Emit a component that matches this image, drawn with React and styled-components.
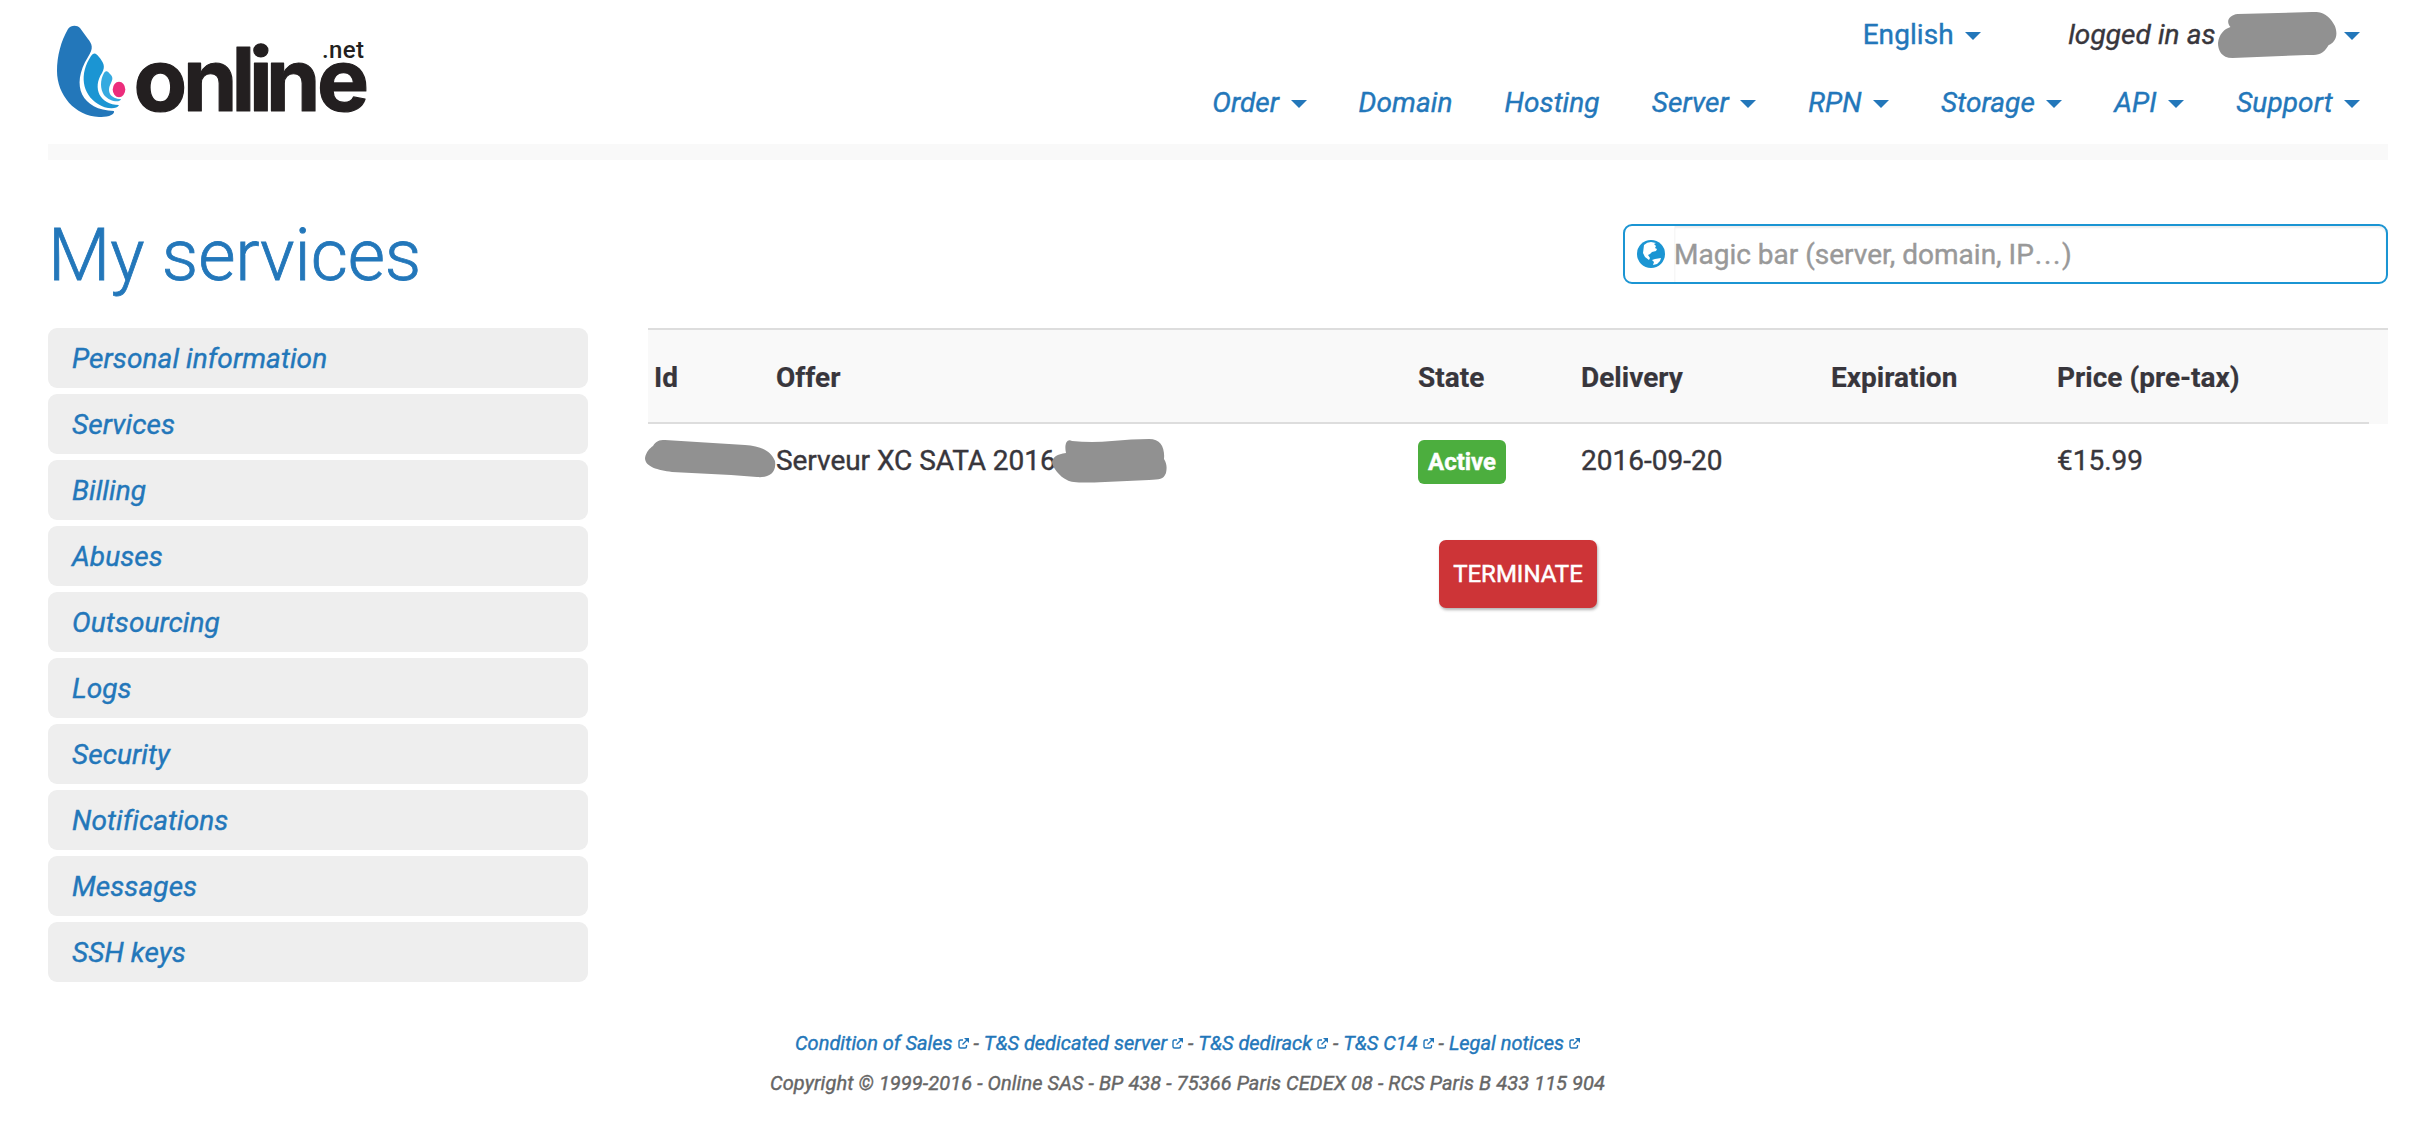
import React from "react";
import styled, { createGlobalStyle } from "styled-components";

const blue = "#2377ba";

const GlobalStyle = createGlobalStyle`
  body {
    margin: 0;
    background: #fff;
    color: #38363c;
    font-family: Roboto, "Liberation Sans", sans-serif;
    font-size: 28px;
    line-height: 40px;
    -webkit-text-stroke: 0.4px;
  }
  *, *::before, *::after { box-sizing: border-box; }
`;

const Page = styled.div`
  width: 2420px;
  height: 1130px;
  padding: 0 32px 0 48px;
  overflow: hidden;
`;

const Header = styled.header`
  display: flex;
  justify-content: space-between;
  height: 160px;
  border-bottom: 16px solid #f9f9f9;
`;

const Logo = styled.svg`
  display: block;
  flex: none;
  width: 332px;
  height: 144px;
  -webkit-text-stroke: 0;
`;

const Menus = styled.div`
  display: flex;
  flex-direction: column;
  align-items: flex-end;
  padding: 15px 28px 0 0;
  gap: 28px;
`;

const Nav = styled.nav`
  display: flex;
  gap: ${(p) => p.$gap}px;
  height: 40px;
`;

const NavLink = styled.a`
  display: inline-flex;
  align-items: center;
  height: 40px;
  color: ${(p) => (p.$dark ? "#38363c" : blue)};
  font-style: ${(p) => (p.$upright ? "normal" : "italic")};
  letter-spacing: 0.08px;
  text-decoration: none;
  white-space: nowrap;
`;

const Caret = styled.span`
  width: 0;
  height: 0;
  margin: 2px 0 0 11.4px;
  border: 8px solid transparent;
  border-top-color: ${blue};
  border-bottom: 0;
`;

const UserMask = styled.svg`
  display: block;
  flex: none;
  width: 121px;
  height: 46px;
  margin: 0 -5px 0 1px;
`;

const TitleRow = styled.div`
  display: flex;
  justify-content: space-between;
  align-items: flex-start;
  height: 168px;
  padding-top: 51px;
`;

const Title = styled.h1`
  margin: 0;
  color: ${blue};
  font-size: 72px;
  line-height: 90px;
  font-weight: 300;
  letter-spacing: -0.1px;
  -webkit-text-stroke: 0.8px;
`;

const SearchBox = styled.label`
  display: flex;
  align-items: center;
  width: 765px;
  height: 60px;
  margin-top: 13px;
  padding-left: 12px;
  border: 2px solid #1b95d3;
  border-radius: 9px;
`;

const Globe = styled.svg`
  flex: none;
  width: 28px;
  height: 28px;
`;

const SearchField = styled.div`
  position: relative;
  flex: 1;
  height: 56px;
  margin-left: 9px;
  color: #999;
`;

const SearchInput = styled.input`
  display: block;
  width: 100%;
  height: 100%;
  padding: 0;
  border: 0;
  border-left: 1px solid #f7f7f7;
  border-radius: 0 7px 7px 0;
  outline: 0;
  background: transparent;
  box-shadow: inset 0 2px 2px rgba(0, 0, 0, 0.07);
  font: inherit;
`;

const Hint = styled.span`
  position: absolute;
  top: 9px;
  left: 0;
  pointer-events: none;
  white-space: nowrap;
`;

const Dots = styled.span`
  margin-left: 1px;
  letter-spacing: 1.7px;
`;

const Content = styled.div`
  display: flex;
  gap: 60px;
  height: 654px;
`;

const Sidebar = styled.nav`
  display: flex;
  flex: none;
  flex-direction: column;
  gap: 6px;
  width: 540px;
`;

const SideLink = styled.a`
  height: 60px;
  padding: 11px 24px 9px;
  border-radius: 9px;
  background: #eee;
  color: ${blue};
  font-style: italic;
  letter-spacing: 0.08px;
  text-decoration: none;
`;

const Main = styled.main`
  flex: 1;
`;

const columns = "122px 642px 163px 250px 226px 318px";

const TableHead = styled.div`
  height: 96px;
  border-top: 2px solid #ddd;
  background: #f9f9f9;
`;

const HeadRow = styled.div`
  display: grid;
  grid-template-columns: ${columns};
  width: 1721px;
  height: 94px;
  padding: 28px 0 0 6px;
  border-bottom: 2px solid #ddd;
  font-weight: 700;
  -webkit-text-stroke: 0.2px;
`;

const Row = styled.div`
  display: grid;
  grid-template-columns: ${columns};
  height: 78px;
  padding: 16px 0 0 6px;
`;

const Cell = styled.div`
  display: flex;
  align-items: flex-start;
  height: 44px;
  line-height: 42px;
  white-space: nowrap;
`;

const OfferName = styled.span`
  letter-spacing: -0.05px;
`;

const IdMask = styled.svg`
  flex: none;
  width: 131px;
  height: 40px;
  margin: -1px 0 0 -9px;
`;

const OfferMask = styled.svg`
  flex: none;
  width: 116px;
  height: 44px;
  margin: -1px 0 0 -4px;
`;

const Badge = styled.span`
  height: 44px;
  padding: 0 10px;
  border-radius: 6px;
  background: #4cae3e;
  color: #fff;
  font-size: 24px;
  line-height: 44px;
  font-weight: 700;
`;

const Actions = styled.div`
  display: flex;
  justify-content: center;
  padding: 38px 0 0 0;
`;

const TerminateButton = styled.button`
  width: 158px;
  height: 68px;
  padding: 0;
  border: 0;
  border-radius: 7px;
  background: #cd3437;
  box-shadow: 1px 2px 3px rgba(0, 0, 0, 0.3);
  color: #fff;
  font: 24px/66px Roboto, "Liberation Sans", sans-serif;
  text-transform: uppercase;
  -webkit-text-stroke: 0.5px;
`;

const Footer = styled.footer`
  display: flex;
  flex-direction: column;
  align-items: center;
  padding: 41px 61px 0 0;
  color: #666;
  font-size: 20px;
  line-height: 40px;
  font-style: italic;
`;

const FooterLinks = styled.div`
  display: flex;
  white-space: pre;
`;

const FooterLink = styled.a`
  display: inline-flex;
  align-items: center;
  color: ${blue};
  text-decoration: none;
`;

const Copyright = styled.span`
  letter-spacing: 0.08px;
`;

const External = styled.svg`
  width: 11px;
  height: 11px;
  margin: 0 0 0 5px;
`;

const navItems = [
  ["Order", true],
  ["Domain", false],
  ["Hosting", false],
  ["Server", true],
  ["RPN", true],
  ["Storage", true],
  ["API", true],
  ["Support", true],
];

const sideItems = [
  "Personal information",
  "Services",
  "Billing",
  "Abuses",
  "Outsourcing",
  "Logs",
  "Security",
  "Notifications",
  "Messages",
  "SSH keys",
];

const footerItems = [
  "Condition of Sales",
  "T&S dedicated server",
  "T&S dedirack",
  "T&S C14",
  "Legal notices",
];

function OnlineLogo() {
  return (
    <Logo viewBox="48 0 332 144">
      <path fill="#2377ba" d="M68 29C71 25 77 25 80 28L88 39C92 44 94 48 88 57C70 86 82 110 114 111C115 116 105 117 99 117C75 116 57 95 57 71C57 56 61 41 68 29Z" />
      <path fill="#1b95d3" d="M91 56C94 52 96 53 99 57C103 62 106 66 102 73C92 88 100 105 119 105C117 110 105 109 98 104C82 94 79 74 91 56Z" />
      <path fill="#36aae0" d="M104 73C106 70 108 71 110 74C113 77 113 79 111 83C106 92 111 99 121 99C120 103 110 102 104 95C100 89 100 80 104 73Z" />
      <ellipse cx="119" cy="89.500" rx="6.300" ry="7.700" fill="#ec2d7c" />
      <text x="133.500 183 231.500 249 266 317" y="110.500" fill="#231f20" stroke="#231f20" strokeWidth="1.2" strokeLinejoin="round" fontFamily="Inter" fontWeight="700" fontSize="87.500">online</text>
      <text x="322" y="58" fill="#231f20" fontFamily="Roboto" fontWeight="500" fontSize="24" textLength="42">.net</text>
    </Logo>
  );
}

export default function App() {
  return (
    <>
      <GlobalStyle />
      <Page>
        <Header>
          <OnlineLogo />
          <Menus>
            <Nav $gap={87}>
              <NavLink $upright>English<Caret /></NavLink>
              <NavLink $dark>
                logged in as
                <UserMask viewBox="0 0 117 46" preserveAspectRatio="none">
                  <path fill="#919191" d="M20 2L92 0C104-1 110 6 114 14C118 25 113 31 108 33C102 44 96 43 87 43L15 46C4 46 1 38 1 31C2 22 7 17 13 15C8 9 12 3 20 2Z" />
                </UserMask>
                <Caret />
              </NavLink>
            </Nav>
            <Nav $gap={52}>
              {navItems.map(([label, menu]) => (
                <NavLink key={label}>{label}{menu && <Caret />}</NavLink>
              ))}
            </Nav>
          </Menus>
        </Header>
        <TitleRow>
          <Title>My services</Title>
          <SearchBox>
            <Globe viewBox="0 0 28 28">
              <circle cx="14" cy="14" r="14" fill="#1b95d3" />
              <path fill="#fff" d="M7 5Q10 2 14 2L19 3L17 4L19 6L18 8L20 9L19 11L15 12L13 14L11 15L13 18L12 20L8 17L6 13Z" />
              <path fill="#fff" d="M15 20L18 19L24 18L23 21L20 24L16 25L17 22Z" />
            </Globe>
            <SearchField>
              <SearchInput aria-label="Magic bar" />
              <Hint>Magic bar (server, domain, IP<Dots>...</Dots>)</Hint>
            </SearchField>
          </SearchBox>
        </TitleRow>
        <Content>
          <Sidebar>
            {sideItems.map((item) => <SideLink key={item}>{item}</SideLink>)}
          </Sidebar>
          <Main>
            <TableHead>
              <HeadRow>
                <span>Id</span>
                <span>Offer</span>
                <span>State</span>
                <span>Delivery</span>
                <span>Expiration</span>
                <span>Price (pre-tax)</span>
              </HeadRow>
            </TableHead>
            <Row>
              <Cell>
                <IdMask viewBox="0 0 131 40">
                  <path fill="#919191" d="M20 1L100 6C116 7 126 12 130 22C132 35 122 39 112 38L86 36L27 33C13 31 0 28 0 19C1 13 5 9 8 7C11 2 14 1 20 1Z" />
                </IdMask>
              </Cell>
              <Cell>
                <OfferName>Serveur XC SATA 2016</OfferName>
                <OfferMask viewBox="0 0 116 44">
                  <path fill="#919191" d="M20 2Q40 4 60 2Q80 0 97 0C109 0 113 9 112 20C115 25 115 29 114 34C111 41 108 40 97 41L53 43C32 44 20 44 15 41C8 38 0 28 0 23C1 18 5 15 14 14C12 5 15-1 20 2Z" />
                </OfferMask>
              </Cell>
              <Cell><Badge>Active</Badge></Cell>
              <Cell>2016-09-20</Cell>
              <Cell />
              <Cell>€15.99</Cell>
            </Row>
            <Actions><TerminateButton>Terminate</TerminateButton></Actions>
          </Main>
        </Content>
        <Footer>
          <FooterLinks>
            {footerItems.map((item, index) => (
              <React.Fragment key={item}>
                {index > 0 && " - "}
                <FooterLink>
                  {item}
                  <External viewBox="0 0 11 11" fill="none" stroke={blue} strokeWidth="1.4">
                    <path d="M5 2H2.500Q1 2 1 4V8.500Q1 10 2.500 10H7Q8.500 10 8.500 8.500V7M4.500 6.500L9 2" />
                    <path fill={blue} stroke="none" d="M6 0H11V5Z" />
                  </External>
                </FooterLink>
              </React.Fragment>
            ))}
          </FooterLinks>
          <Copyright>Copyright © 1999-2016 - Online SAS - BP 438 - 75366 Paris CEDEX 08 - RCS Paris B 433 115 904</Copyright>
        </Footer>
      </Page>
    </>
  );
}
